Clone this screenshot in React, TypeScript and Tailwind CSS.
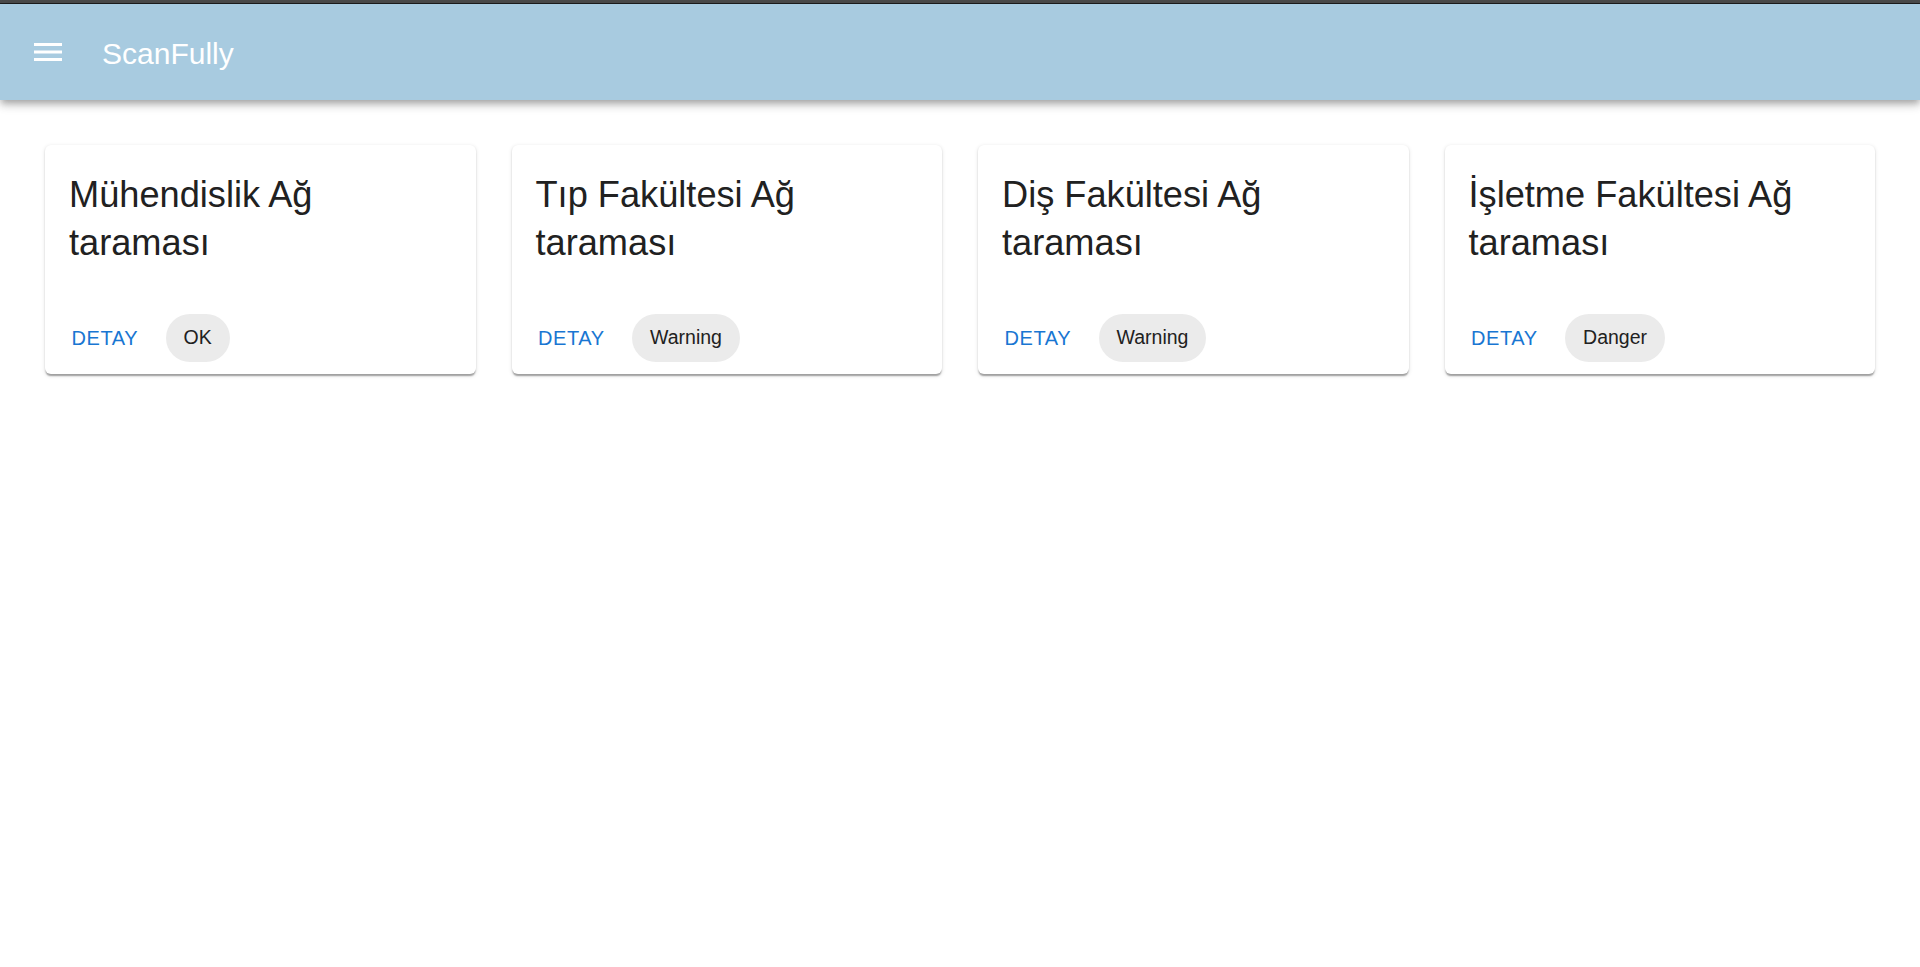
import React from "react";

const cards = [
  { title: "Mühendislik Ağ taraması", status: "OK" },
  { title: "Tıp Fakültesi Ağ taraması", status: "Warning" },
  { title: "Diş Fakültesi Ağ taraması", status: "Warning" },
  { title: "İşletme Fakültesi Ağ taraması", status: "Danger" },
];

export default function App() {
  return (
    <div className="min-h-screen bg-white font-['Liberation_Sans',Arial,sans-serif]">
      <div className="h-[4px] bg-[#4b4b4b] border-b border-[#1f1f1f]" />
      <header className="relative z-10 flex h-[96px] items-center bg-[#a8cbe0] shadow-[0_3px_6px_-1.5px_rgba(0,0,0,0.2),0_6px_7.5px_0_rgba(0,0,0,0.14),0_1.5px_15px_0_rgba(0,0,0,0.12)]">
        <svg className="ml-[34px] block" width="28" height="18" viewBox="0 0 28 18" fill="#ffffff">
          <rect x="0" y="0" width="28" height="3" />
          <rect x="0" y="7.5" width="28" height="3" />
          <rect x="0" y="15" width="28" height="3" />
        </svg>
        <div className="ml-[40px] mt-[3px] text-[30px] leading-none text-white">ScanFully</div>
      </header>
      <main className="grid grid-cols-4 gap-[36px] px-[45px] pt-[45px]">
        {cards.map((c) => (
          <div
            key={c.title}
            className="rounded-[6px] bg-white shadow-[0_3px_1.5px_-1.5px_rgba(0,0,0,0.2),0_1.5px_1.5px_0_rgba(0,0,0,0.14),0_1.5px_4.5px_0_rgba(0,0,0,0.12)]"
          >
            <div className="px-[24px] pt-[26px] pb-[22px]">
              <div className="mb-[12.6px] text-[36.2px] leading-[48px] text-[#212121]">{c.title}</div>
            </div>
            <div className="flex items-center p-[12px]">
              <button className="flex h-[45px] items-center pl-[14.5px] pr-[13.5px] text-[20px] uppercase tracking-[0.02857em] text-[#1976d2]">
                DETAY
              </button>
              <div className="ml-[14px] flex h-[48px] items-center rounded-full bg-[#ebebeb] px-[18px] text-[19.5px] text-[#212121]">
                {c.status}
              </div>
            </div>
          </div>
        ))}
      </main>
    </div>
  );
}
